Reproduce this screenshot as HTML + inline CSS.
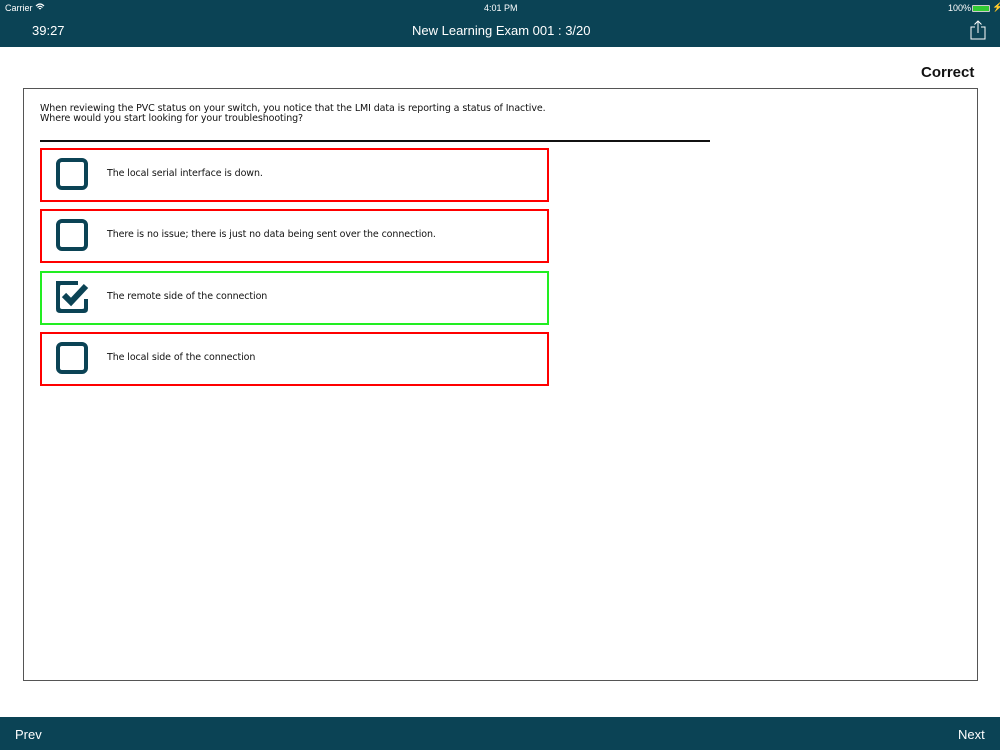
<!DOCTYPE html>
<html><head><meta charset="utf-8"><style>
*{margin:0;padding:0;box-sizing:border-box}
body{width:1000px;height:750px;background:#fff;font-family:"Liberation Sans",sans-serif;position:relative;overflow:hidden}
.hdr{position:absolute;left:0;top:0;width:1000px;height:47px;background:#0b4355;color:#fff}
.sb{position:absolute;top:3px;font-size:9px}
.t{position:absolute;top:23px;font-size:13px}
.ft{position:absolute;left:0;top:717px;width:1000px;height:33px;background:#0b4355;color:#fff;font-size:13px}
.box{position:absolute;left:23px;top:88px;width:955px;height:593px;border:1px solid #555}
.q{position:absolute;left:40px;top:104px;font-size:9.5px;line-height:10px;color:#111;font-family:"DejaVu Sans",sans-serif;letter-spacing:-0.1px}
.line{position:absolute;left:40px;top:140px;width:670px;height:2px;background:#111}
.opt{position:absolute;left:40px;width:509px;height:54px;border:2px solid #f00}
.opt.g{border-color:#2e2}
.cb{position:absolute;left:14px;top:8px;width:32px;height:32px;border:4px solid #0b4355;border-radius:6px}
.opt span{position:absolute;left:65px;top:18px;font-size:9.5px;font-family:"DejaVu Sans",sans-serif;color:#111;letter-spacing:-0.1px}
</style></head><body>
<div class="hdr">
<div class="sb" style="left:5px">Carrier <svg width="10" height="8" viewBox="0 0 10 8"><path d="M1 3Q5 -1 9 3M2.5 4.5Q5 2 7.5 4.5M4 6Q5 5 6 6" stroke="#fff" fill="none" stroke-width="1.2"/></svg></div>
<div class="sb" style="left:484px">4:01 PM</div>
<div class="sb" style="left:948px">100%</div>
<div style="position:absolute;left:972px;top:5px;width:18px;height:7px;background:#3c3;border:1px solid #ccc;border-radius:1px"></div>
<div class="sb" style="left:992px;top:2px">⚡</div>
<div class="t" style="left:32px">39:27</div>
<div class="t" style="left:412px">New Learning Exam 001 : 3/20</div>
<svg style="position:absolute;left:970px;top:20px" width="16" height="20" viewBox="0 0 16 20"><path d="M5 7H1V19H15V7H11M8 13V1M4.5 4.5L8 1L11.5 4.5" stroke="#fff" fill="none" stroke-width="1"/></svg>
</div>
<div style="position:absolute;left:921px;top:64px;font-size:15px;font-weight:bold;color:#111">Correct</div>
<div class="box"></div>
<div class="q">When reviewing the PVC status on your switch, you notice that the LMI data is reporting a status of Inactive.<br>Where would you start looking for your troubleshooting?</div>
<div class="line"></div>
<div class="opt" style="top:148px"><div class="cb"></div><span>The local serial interface is down.</span></div>
<div class="opt" style="top:209px"><div class="cb"></div><span>There is no issue; there is just no data being sent over the connection.</span></div>
<div class="opt g" style="top:271px"><div class="cb" style="border-top-color:transparent;border-right-color:transparent"></div>
<svg style="position:absolute;left:14px;top:8px" width="34" height="32" viewBox="0 0 34 32"><path d="M2 6V2H22M30 18V28Q30 30 28 30H4Q2 30 2 28V6" stroke="#0b4355" stroke-width="4" fill="none"/><path d="M8 14L15 21L30 5" stroke="#0b4355" stroke-width="6" fill="none"/></svg>
<span>The remote side of the connection</span></div>
<div class="opt" style="top:332px"><div class="cb"></div><span>The local side of the connection</span></div>
<div class="ft"><div style="position:absolute;left:15px;top:10px">Prev</div><div style="position:absolute;left:958px;top:10px">Next</div></div>
</body></html>
